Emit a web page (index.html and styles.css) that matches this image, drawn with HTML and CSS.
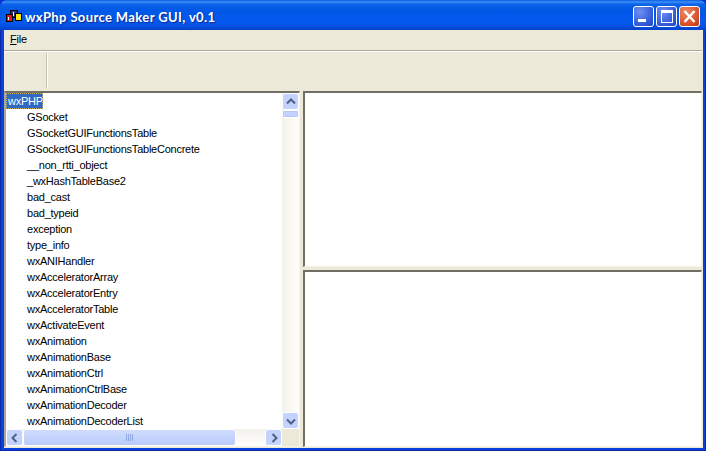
FILE: index.html
```html
<!DOCTYPE html>
<html lang="en">
<head>
<meta charset="utf-8">
<title>wxPhp Source Maker GUI, v0.1</title>
<link rel="stylesheet" href="styles.css">
</head>
<body>
<div class="window">
  <header class="titlebar">
    <svg class="app-icon" width="18" height="16" viewBox="0 0 18 16">
      <rect x="5.500" y="3.500" width="7" height="7" fill="#2b2f7a" stroke="#000"/>
      <rect x="1.500" y="7.500" width="6" height="7" fill="#e8141c" stroke="#000"/>
      <rect x="10.500" y="6.500" width="6" height="7" fill="#ffe800" stroke="#000"/>
      <rect x="8" y="5" width="1" height="4" fill="#fff"/>
      <rect x="3" y="10" width="1" height="3" fill="#fff"/>
    </svg>
    <span class="title">wxPhp Source Maker GUI, v0.1</span>
    <div class="caption-buttons">
      <div class="cap-btn cap-blue">
        <svg width="21" height="21" viewBox="0 0 21 21"><rect x="5" y="13" width="8" height="3" fill="#fff"/></svg>
      </div>
      <div class="cap-btn cap-blue">
        <svg width="21" height="21" viewBox="0 0 21 21"><path d="M5 4h12v13H5z M6 7v9h10V7z" fill="#fff" fill-rule="evenodd"/></svg>
      </div>
      <div class="cap-btn cap-red">
        <svg width="21" height="21" viewBox="0 0 21 21"><path d="M5.500 5 L15.500 16 M15.500 5 L5.500 16" stroke="#fff" stroke-width="2.400" fill="none"/></svg>
      </div>
    </div>
  </header>
  <div class="client">
    <nav class="menubar"><span class="menu-item"><u>F</u>ile</span></nav>
    <div class="toolbar"><div class="gripper"></div></div>
    <main class="panes">
      <section class="tree-pane">
        <div class="tree-main">
          <ul class="tree">
            <li class="root"><span class="selected">wxPHP</span></li>
            <li>GSocket</li>
            <li>GSocketGUIFunctionsTable</li>
            <li>GSocketGUIFunctionsTableConcrete</li>
            <li>__non_rtti_object</li>
            <li>_wxHashTableBase2</li>
            <li>bad_cast</li>
            <li>bad_typeid</li>
            <li>exception</li>
            <li>type_info</li>
            <li>wxANIHandler</li>
            <li>wxAcceleratorArray</li>
            <li>wxAcceleratorEntry</li>
            <li>wxAcceleratorTable</li>
            <li>wxActivateEvent</li>
            <li>wxAnimation</li>
            <li>wxAnimationBase</li>
            <li>wxAnimationCtrl</li>
            <li>wxAnimationCtrlBase</li>
            <li>wxAnimationDecoder</li>
            <li>wxAnimationDecoderList</li>
          </ul>
          <div class="vscroll">
            <div class="sb-btn"><svg width="16" height="16" viewBox="0 0 16 16"><path d="M4 9.500 L8 5.500 L12 9.500" stroke="#4d6185" stroke-width="2" fill="none"/></svg></div>
            <div class="vthumb"></div>
            <div class="sb-track"></div>
            <div class="sb-btn"><svg width="16" height="16" viewBox="0 0 16 16"><path d="M4 6.500 L8 10.500 L12 6.500" stroke="#4d6185" stroke-width="2" fill="none"/></svg></div>
          </div>
        </div>
        <div class="hscroll">
          <div class="sb-btn"><svg width="16" height="16" viewBox="0 0 16 16"><path d="M9.500 4 L5.500 8 L9.500 12" stroke="#4d6185" stroke-width="2" fill="none"/></svg></div>
          <div class="hthumb"><svg width="8" height="7" viewBox="0 0 8 7"><path d="M0.500 0v7M2.500 0v7M4.500 0v7M6.500 0v7" stroke="#8faae0"/></svg></div>
          <div class="sb-track"></div>
          <div class="sb-btn"><svg width="16" height="16" viewBox="0 0 16 16"><path d="M6.500 4 L10.500 8 L6.500 12" stroke="#4d6185" stroke-width="2" fill="none"/></svg></div>
          <div class="sb-corner"></div>
        </div>
      </section>
      <section class="right-pane">
        <div class="doc doc-top"></div>
        <div class="doc doc-bottom"></div>
      </section>
    </main>
  </div>
</div>
</body>
</html>
```
FILE: styles.css
```css
* { box-sizing: border-box; }
html, body { margin: 0; padding: 0; }
body { width: 706px; height: 451px; overflow: hidden; background: #0831d9; }
.window {
  width: 706px; height: 451px;
  display: flex; flex-direction: column;
  background: #0a3fe0;
  border-radius: 7px 7px 0 0;
  box-shadow: inset -1px -1px 0 #0a2aa8, inset 1px 0 0 #0a2aa8;
  overflow: hidden;
}
.titlebar {
  height: 30px; flex: none;
  display: flex; align-items: center;
  padding: 0 6px 0 5px;
  background: linear-gradient(#0a5ae0 0, #3a92f5 2px, #0f63ea 4px, #0058e6 10px, #0558ee 22px, #0550e2 26px, #0441c8 30px);
}
.app-icon { flex: none; margin: 0 2px 0 0; }
.title {
  font: bold 13px "Lato", "Open Sans", sans-serif;
  letter-spacing: 0.38px;
  color: #fff;
  text-shadow: 1px 1px 1px #0a2a90;
  flex: 1;
  margin-top: 3px;
  white-space: nowrap;
}
.caption-buttons { display: flex; gap: 2px; margin-top: 3px; }
.cap-btn {
  width: 21px; height: 21px;
  border: 1px solid #fff; border-radius: 3px;
  display: flex; align-items: center; justify-content: center;
}
.cap-btn svg { flex: none; }
.cap-blue { background: radial-gradient(circle at 30% 25%, #6f8ff0, #2f58d8 70%, #2048c0); }
.cap-red { background: radial-gradient(circle at 30% 25%, #ec8a68, #d9512a 65%, #b83a1c); }
.client {
  flex: 1;
  margin: 0 3px 3px 4px;
  padding: 0 1px 1px 0;
  display: flex; flex-direction: column;
  background: #ece9d8;
  min-height: 0;
}
.menubar {
  height: 21px; flex: none;
  padding: 1px 0 0 6px;
  border-bottom: 1px solid #aca899;
  font: 11px/16px Tahoma, "Liberation Sans", sans-serif;
  letter-spacing: -0.2px;
  color: #000;
}
.toolbar {
  height: 40px; flex: none;
  border-top: 1px solid #fff;
  padding: 1px 0 0 42px;
}
.gripper { width: 2px; height: 35px; background: linear-gradient(90deg, #c8c5b2 50%, #fff 50%); }
.panes { flex: 1; display: flex; min-height: 0; gap: 3px; }
.tree-pane {
  width: 296px; flex: none;
  display: flex; flex-direction: column;
  background: #fff;
  border-top: 2px solid #716f64;
  border-left: 2px solid #aca899;
  border-right: 1px solid #f5f3e8;
  border-bottom: 1px solid #f5f3e8;
}
.tree-main { flex: 1; display: flex; min-height: 0; }
.tree {
  flex: 1; margin: 0; padding: 0; list-style: none;
  overflow: hidden;
  font: 11px/16px Tahoma, "Liberation Sans", sans-serif;
  letter-spacing: -0.24px;
  color: #000;
}
.tree li { height: 16px; padding-left: 21px; white-space: nowrap; }
.tree li.root { padding-left: 0; }
.selected {
  display: inline-block; height: 16px; padding: 0 0 0 2px;
  background: #316ac5; color: #fff;
  outline: 1px dotted #c9b060; outline-offset: -1px;
}
.vscroll {
  width: 17px; flex: none;
  display: flex; flex-direction: column;
  background: linear-gradient(90deg, #f3f1ec, #fefefb);
}
.hscroll {
  height: 17px; flex: none;
  display: flex;
  background: linear-gradient(#f3f1ec, #fefefb);
}
.sb-btn {
  width: 17px; height: 17px; flex: none;
  background: #c3d3fd;
  border: 1px solid #fff; border-radius: 3px;
  display: flex; align-items: center; justify-content: center;
}
.sb-btn svg { flex: none; }
.sb-track { flex: 1; }
.sb-corner { width: 17px; flex: none; background: #ece9d8; }
.vthumb { height: 8px; flex: none; background: #c3d3fd; border: 1px solid #fff; border-radius: 2px; box-shadow: inset 0 0 0 1px #b4c8f6; }
.hthumb {
  width: 213px; flex: none;
  background: linear-gradient(#cfdcfd, #b8cbfa);
  border: 1px solid #fff; border-radius: 3px;
  display: flex; align-items: center; justify-content: center;
}
.right-pane { flex: 1; display: flex; flex-direction: column; gap: 3px; min-width: 0; }
.doc {
  background: #fff;
  border-top: 2px solid #716f64;
  border-left: 2px solid #716f64;
  border-right: 1px solid #f5f3e8;
}
.doc-top { height: 176px; flex: none; border-bottom: 1px solid #f5f3e8; }
.doc-bottom { flex: 1; border-bottom: 1px solid #f5f3e8; }
```
